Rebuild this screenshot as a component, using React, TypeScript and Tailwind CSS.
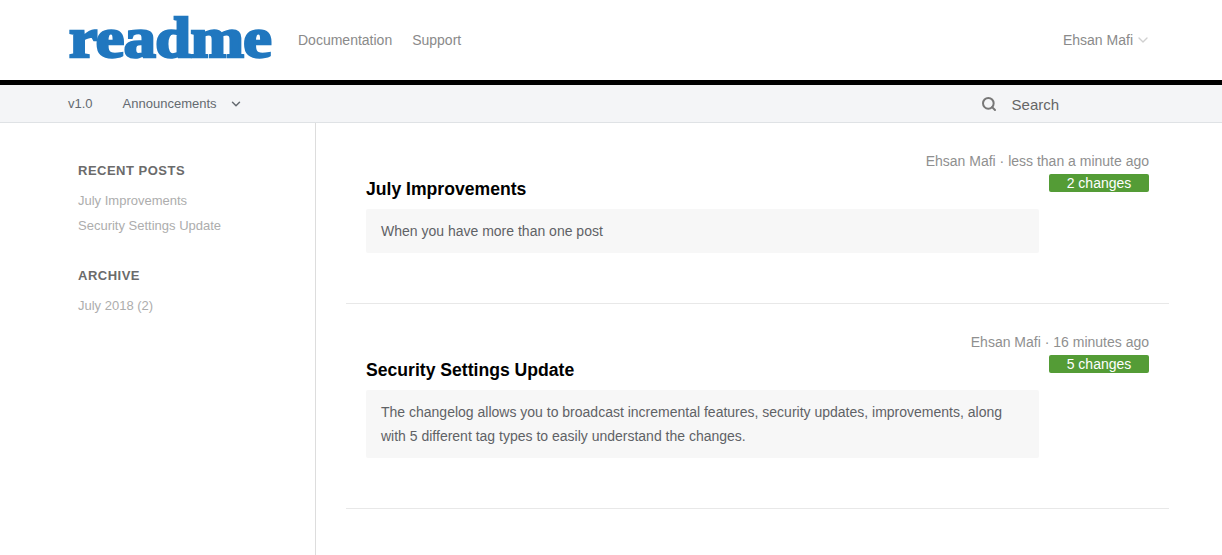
import { ChevronDown, Search } from "lucide-react";

const sans = "font-['Liberation_Sans',Arial,sans-serif]";

const posts = [
  {
    title: "July Improvements",
    meta: "Ehsan Mafi · less than a minute ago",
    changes: "2 changes",
    body: ["When you have more than one post"],
  },
  {
    title: "Security Settings Update",
    meta: "Ehsan Mafi · 16 minutes ago",
    changes: "5 changes",
    body: [
      "The changelog allows you to broadcast incremental features, security updates, improvements, along",
      "with 5 different tag types to easily understand the changes.",
    ],
  },
];

function Post({ post }: { post: (typeof posts)[number] }) {
  return (
    <article className="border-b border-[#e8e8e8] pl-5 pr-5 pt-[28px] pb-[50px]">
      <div className="flex justify-between">
        <h2 className="pt-[26px] text-[17.6px] leading-[24px] font-bold text-black">{post.title}</h2>
        <div className="flex flex-col items-end">
          <div className="text-[14px] leading-[20px] text-[#8f8f8f]">{post.meta}</div>
          <div className="mt-[3px] flex h-[18px] w-[100px] items-center justify-center rounded-[2px] bg-[#549c36] text-[14px] text-white">
            {post.changes}
          </div>
        </div>
      </div>
      <div className="mt-[8px] w-[673px] rounded-[2px] bg-[#f7f7f7] px-[15px] py-[10px] text-[14px] leading-[24px] text-[#5f6266]">
        {post.body.map((line) => (
          <div key={line}>{line}</div>
        ))}
      </div>
    </article>
  );
}

export default function App() {
  return (
    <div className={`${sans} flex h-[555px] flex-col overflow-hidden bg-white`}>
      {/* Header */}
      <header className="flex h-[85px] shrink-0 items-center border-b-[5px] border-black pl-[69px] pr-[71px]">
        <div className="h-[80px] w-[203px] origin-left scale-x-[1.107] font-['Liberation_Serif',serif] text-[58px] leading-[76px] font-bold tracking-[-0.5px] text-[#2077bf] [-webkit-text-stroke:2.5px_#2077bf]">
          readme
        </div>
        <nav className="ml-[26px] flex gap-[20px] text-[14px] text-[#8a8a8a]">
          <span>Documentation</span>
          <span>Support</span>
        </nav>
        <div className="ml-auto flex items-center gap-[2px] text-[14px] text-[#8a8a8a]">
          Ehsan Mafi
          <ChevronDown className="h-[16px] w-[16px] text-[#d0d0d0]" strokeWidth={2} />
        </div>
      </header>

      {/* Sub nav */}
      <div className="flex h-[38px] shrink-0 items-center border-b border-[#dfe2e5] bg-[#f4f5f7] pl-[68px] text-[13px] text-[#646a70]">
        <span>v1.0</span>
        <span className="ml-[30px]">Announcements</span>
        <ChevronDown className="ml-[12px] h-[14px] w-[14px] text-[#646a70]" strokeWidth={2.5} />
        <Search className="ml-[738px] h-[16px] w-[16px] text-[#777]" strokeWidth={3} />
        <span className="ml-[15px] pt-[3px] text-[15px] text-[#666]">Search</span>
      </div>

      <div className="flex min-h-0 flex-1">
        {/* Sidebar */}
        <aside className="w-[316px] shrink-0 border-r border-[#dddddd] pt-[40px] pl-[78px]">
          <h3 className="text-[13px] leading-[16px] font-bold tracking-[0.5px] text-[#6b6b6b]">RECENT POSTS</h3>
          <div className="mt-[12px] flex flex-col gap-[5px] text-[13px] leading-[20px] text-[#adadad]">
            <span>July Improvements</span>
            <span>Security Settings Update</span>
          </div>
          <h3 className="mt-[32px] text-[13px] leading-[16px] font-bold tracking-[0.5px] text-[#6b6b6b]">ARCHIVE</h3>
          <div className="mt-[12px] text-[13px] leading-[20px] text-[#adadad]">July 2018 (2)</div>
        </aside>

        {/* Posts */}
        <main className="ml-[30px] w-[823px]">
          {posts.map((post) => (
            <Post key={post.title} post={post} />
          ))}
        </main>
      </div>
    </div>
  );
}
